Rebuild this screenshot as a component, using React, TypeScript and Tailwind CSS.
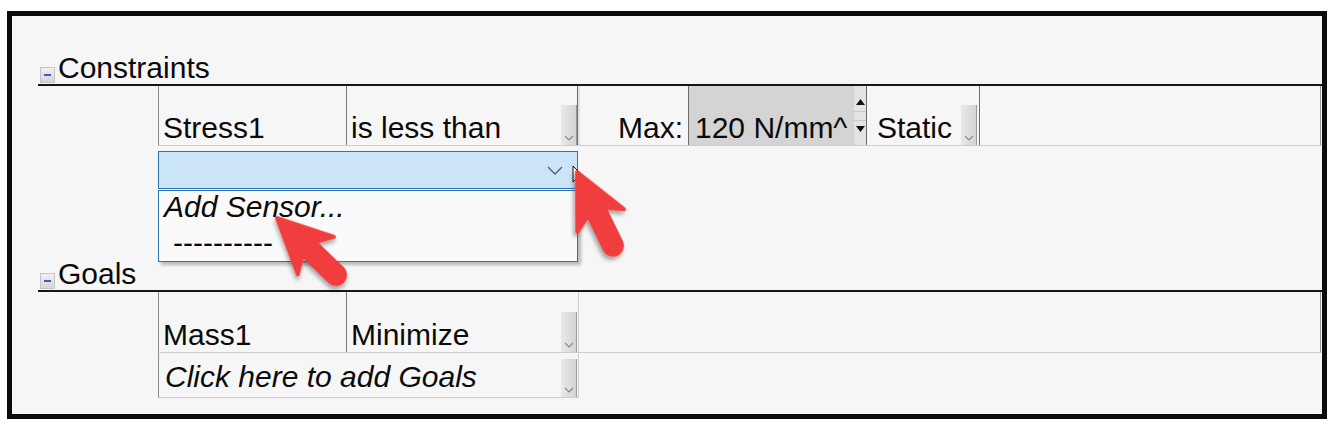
import React from "react"

const font = { fontFamily: "'Liberation Sans', Arial, sans-serif" }

function MinusBox() {
  return (
    <div className="ml-[2px] mr-[3px] mb-[1px] w-[15px] h-[16px] flex items-end justify-center pb-[6px] bg-gradient-to-b from-[#f0f0f0] to-[#d6d6d6] border border-[#c4c4c4]">
      <div className="w-[7px] h-[2px] bg-[#3c5bc4]" />
    </div>
  )
}

function DropButton({ h = "h-[40px]" }: { h?: string }) {
  // little grey combo button with a chevron at its foot
  return (
    <div className={`w-[16px] ${h} self-end flex items-end justify-center pb-[3px] bg-gradient-to-r from-[#e9e9e9] to-[#d4d4d4] border-r border-[#9a9a9a]`}>
      <svg width="10" height="7" viewBox="0 0 10 7" fill="none">
        <path d="M1 1 L5 5 L9 1" stroke="#8a8a8a" strokeWidth="1.2" />
      </svg>
    </div>
  )
}

function Header({ label, top }: { label: string; top: string }) {
  return (
    <div className={`ml-[26px] ${top}`}>
      <div className="flex items-end border-b-2 border-[#161616]">
        <MinusBox />
        <span className="text-[30px] leading-[32px] text-[#0a0a0a]">{label}</span>
      </div>
    </div>
  )
}

function Arrow({ x, y, angle }: { x: number; y: number; angle: number }) {
  return (
    <g transform={`translate(${x} ${y}) rotate(${angle})`} filter="url(#arrowShadow)">
      <path
        d="M0 0 L54 -26 L44 -9 L82 -9 A9 9 0 0 1 82 9 L44 9 L54 26 Z"
        fill="#f03c3c"
        stroke="#f03c3c"
        strokeWidth="4"
        strokeLinejoin="round"
      />
    </g>
  )
}

export default function App() {
  return (
    <div className="relative w-[1332px] h-[424px] bg-white pt-[11px] pl-[7px]" style={font}>
      <div className="relative w-[1320px] h-[408px] border-[5px] border-[#0c0c0c] bg-[#f6f6f6] text-[#0a0a0a]">
        {/* Constraints */}
        <Header label="Constraints" top="pt-[36px]" />
        <div className="ml-[146px] mr-[1px] flex h-[60px] border-l border-r border-b border-l-[#8c8c8c] border-r-[#9a9a9a] border-b-[#cdcdcd] text-[30px] leading-[32px]">
          <div className="w-[188px] flex items-end pl-[4px] pb-[1px] border-r border-[#767676]">Stress1</div>
          <div className="w-[231px] flex items-end justify-between pl-[4px] border-r border-[#6e6e6e]">
            <span className="pb-[1px]">is less than</span>
            <DropButton />
          </div>
          <div className="w-[110px] flex items-end justify-end pr-[5px] pb-[1px] border-l-2 border-[#e2e2e2]">Max:</div>
          <div className="flex border-l border-r border-[#6a6a6a]">
            <div className="w-[164px] flex items-end pl-[6px] pb-[1px] bg-[#d4d4d4]">120 N/mm^</div>
            <div className="w-[13px] flex flex-col items-center bg-[#e4e4e4] border-l border-[#cfcfcf] pt-[8px]">
              <svg width="9" height="6" viewBox="0 0 9 6" className="mt-[5px]">
                <path d="M0 6 L4.5 0 L9 6 Z" fill="#111" />
              </svg>
              <div className="w-full h-px bg-[#c8c8c8] mt-[6px]" />
              <div className="w-full h-px bg-[#c8c8c8] mt-[8px]" />
              <svg width="9" height="6" viewBox="0 0 9 6" className="mt-[5px]">
                <path d="M0 0 L4.5 6 L9 0 Z" fill="#111" />
              </svg>
            </div>
          </div>
          <div className="w-[113px] flex items-end justify-between pl-[10px] pr-[2px] border-r border-[#6e6e6e]">
            <span className="pb-[1px]">Static</span>
            <DropButton />
          </div>
          <div className="flex-1" />
        </div>

        {/* add-constraint row, opened as a combo */}
        <div className="h-[45px] ml-[146px] pt-[5px]">
          <div className="w-[420px] h-[38px] flex items-center justify-end pr-[14px] bg-[#cce4f7] border border-[#2f73b4]">
            <svg width="16" height="9" viewBox="0 0 16 9" fill="none">
              <path d="M1 1 L8 8 L15 1" stroke="#5a5a5a" strokeWidth="1.3" />
            </svg>
          </div>
        </div>

        {/* Goals */}
        <Header label="Goals" top="mt-[67px]" />
        <div className="ml-[146px] mr-[1px] flex h-[61px] border-l border-r border-b border-l-[#8c8c8c] border-r-[#9a9a9a] border-b-[#cdcdcd] text-[30px] leading-[32px]">
          <div className="w-[188px] flex items-end pl-[4px] pb-[1px] border-r border-[#767676]">Mass1</div>
          <div className="w-[232px] flex items-end justify-between pl-[4px] pr-[1px] border-r border-[#d0d0d0]">
            <span className="pb-[1px]">Minimize</span>
            <DropButton />
          </div>
          <div className="flex-1" />
        </div>
        <div className="ml-[146px] w-[421px] h-[45px] flex items-end justify-between pl-[6px] pr-[1px] border-l border-r border-b border-l-[#8c8c8c] border-r-[#d0d0d0] border-b-[#cdcdcd] text-[30px] leading-[32px] italic">
          <span className="pb-[4px]">Click here to add Goals</span>
          <DropButton h="h-[38px]" />
        </div>

        {/* open list of the combo */}
        <div className="absolute left-[146px] top-[174px] w-[420px] h-[72px] bg-[#fafafa] border border-[#2f73b4] shadow-[3px_3px_3px_rgba(0,0,0,0.25)] pl-[5px] text-[30px] leading-[32px]">
          <div className="italic">Add Sensor...</div>
          <div className="pl-[9px] mt-[4px]">----------</div>
        </div>
      </div>

      {/* pointers drawn over the screenshot */}
      <svg className="absolute inset-0 pointer-events-none" width="1332" height="424" viewBox="0 0 1332 424">
        <defs>
          <filter id="arrowShadow" x="-30%" y="-30%" width="160%" height="160%">
            <feDropShadow dx="2" dy="3" stdDeviation="2" floodColor="#000" floodOpacity="0.35" />
          </filter>
        </defs>
        <path d="M573 166 L573 182 L577 178 L580 184 L582 183 L579 177 L584 177 Z" fill="#fff" stroke="#111" strokeWidth="1" />
        <Arrow x={277} y={218} angle={44} />
        <Arrow x={577} y={172} angle={64} />
      </svg>
    </div>
  )
}
